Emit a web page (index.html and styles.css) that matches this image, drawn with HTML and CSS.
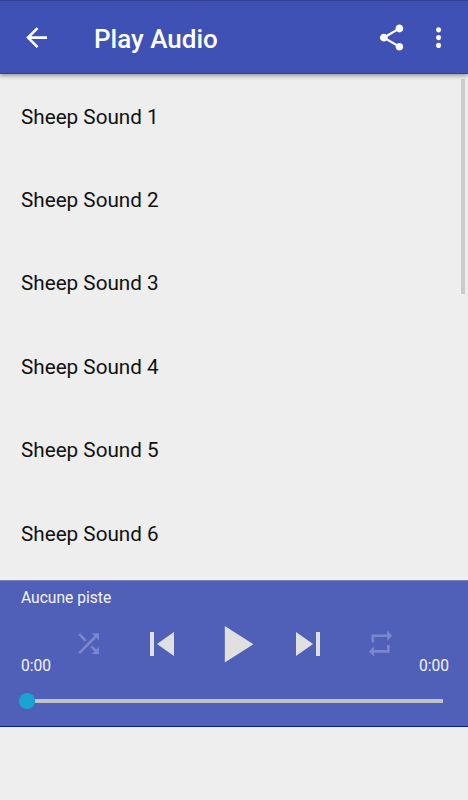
FILE: index.html
```html
<!DOCTYPE html>
<html lang="fr">
<head>
    <meta charset="UTF-8">
    <meta name="viewport" content="width=device-width, initial-scale=1.0">
    <title>Play Audio</title>
    <link rel="stylesheet" href="styles.css">
</head>
<body>
    <header class="toolbar">
        <svg class="icon" viewBox="0 0 24 24"><path d="M20 11H7.83l5.59-5.59L12 4l-8 8 8 8 1.41-1.41L7.83 13H20v-2z"/></svg>
        <h1>Play Audio</h1>
        <svg class="icon share" viewBox="0 0 24 24"><path d="M18 16.08c-.76 0-1.44.3-1.96.77L8.91 12.7c.05-.23.09-.46.09-.7s-.04-.47-.09-.7l7.05-4.11c.54.5 1.25.81 2.04.81 1.66 0 3-1.34 3-3s-1.34-3-3-3-3 1.34-3 3c0 .24.04.47.09.7L8.04 9.81C7.5 9.31 6.79 9 6 9c-1.66 0-3 1.34-3 3s1.34 3 3 3c.79 0 1.5-.31 2.04-.81l7.12 4.16c-.05.21-.08.43-.08.65 0 1.61 1.31 2.92 2.92 2.92 1.61 0 2.92-1.31 2.92-2.92s-1.31-2.92-2.92-2.92z"/></svg>
        <svg class="icon" viewBox="0 0 24 24"><path d="M12 8c1.1 0 2-.9 2-2s-.9-2-2-2-2 .9-2 2 .9 2 2 2zm0 2c-1.1 0-2 .9-2 2s.9 2 2 2 2-.9 2-2-.9-2-2-2zm0 6c-1.1 0-2 .9-2 2s.9 2 2 2 2-.9 2-2-.9-2-2-2z"/></svg>
    </header>

    <main class="content">
        <ul class="tracks">
            <li>Sheep Sound 1</li>
            <li>Sheep Sound 2</li>
            <li>Sheep Sound 3</li>
            <li>Sheep Sound 4</li>
            <li>Sheep Sound 5</li>
            <li>Sheep Sound 6</li>
        </ul>
        <div class="scrollbar"></div>
    </main>

    <section class="player">
        <div class="track-name">Aucune piste</div>
        <div class="controls">
            <svg class="icon off" viewBox="0 0 24 24"><path d="M10.59 9.17L5.41 4 4 5.41l5.17 5.17 1.42-1.41zM14.5 4l2.04 2.04L4 18.59 5.41 20 17.96 7.46 20 9.5V4h-5.5zm.33 9.41l-1.41 1.41 3.13 3.13L14.5 20H20v-5.5l-2.04 2.04-3.13-3.13z"/></svg>
            <svg class="icon skip" viewBox="0 0 24 24"><path d="M6 6h2v12H6zm3.5 6l8.5 6V6z"/></svg>
            <svg class="icon play" viewBox="0 0 24 24"><path d="M8 5v14l11-7z"/></svg>
            <svg class="icon skip" viewBox="0 0 24 24"><path d="M6 18l8.5-6L6 6v12zM16 6v12h2V6h-2z"/></svg>
            <svg class="icon off" viewBox="0 0 24 24"><path d="M7 7h10v3l4-4-4-4v3H5v6h2V7zm10 10H7v-3l-4 4 4 4v-3h12v-6h-2v4z"/></svg>
        </div>
        <div class="times">
            <span>0:00</span>
            <span>0:00</span>
        </div>
        <div class="seekbar">
            <div class="thumb"></div>
            <div class="line"></div>
        </div>
    </section>
</body>
</html>
```

FILE: styles.css
```css
* {
    box-sizing: border-box;
}
body {
    font-family: Roboto, sans-serif;
    background-color: #eeeeee;
    color: #111;
    margin: 0;
    height: 800px;
    overflow: hidden;
}
.icon {
    display: block;
    flex: none;
    width: 31.2px;
    height: 31.2px;
    fill: #fff;
}
.toolbar {
    position: relative;
    display: flex;
    align-items: center;
    height: 74px;
    padding: 1px 14.2px 0 21px;
    background-color: #3f51b5;
    border-top: 1px solid #303f8f;
    border-bottom: 1px solid #2c3fa4;
    box-shadow: 0 2px 4px rgba(0, 0, 0, 0.35);
}
.toolbar h1 {
    flex: 1;
    margin: 2px 0 0 41.8px;
    color: #fff;
    font-size: 26px;
    font-weight: 500;
    line-height: 32px;
}
.share {
    margin-right: 15.5px;
}
.content {
    display: flex;
    justify-content: space-between;
    height: 506px;
    overflow: hidden;
}
.tracks {
    list-style: none;
    margin: 0;
    padding: 1.6px 0 0 21px;
}
.tracks li {
    height: 83.4px;
    line-height: 83.4px;
    font-size: 20.7px;
}
.scrollbar {
    width: 4px;
    height: 215px;
    margin: 5px 3px 0 0;
    background-color: #cbcbcb;
}
.player {
    height: 147px;
    padding: 8px 19px 0 21px;
    background-color: #5060b8;
    border-top: 1px solid #7480c0;
    border-bottom: 1px solid #00209a;
    color: #f4f5fb;
    font-size: 15.6px;
}
.track-name {
    line-height: 18px;
}
.controls {
    display: grid;
    grid-template-columns: repeat(5, 73px);
    justify-content: center;
    place-items: center;
    height: 62px;
    margin: 5.7px 0.5px 0 0;
}
.controls .icon {
    fill: #e0e0e0;
}
.controls .skip {
    width: 48px;
    height: 48px;
}
.controls .play {
    width: 62.4px;
    height: 62.4px;
}
.controls .off {
    fill: #7b87ca;
}
.times {
    display: flex;
    justify-content: space-between;
    margin-top: -17.7px;
    line-height: 18px;
}
.seekbar {
    display: flex;
    align-items: center;
    height: 16px;
    margin: 18px 6px 0 -1.7px;
}
.thumb {
    width: 16px;
    height: 16px;
    border-radius: 50%;
    background-color: #18a5d3;
}
.line {
    flex: 1;
    height: 4px;
    background-color: #bdc3c7;
}
```
